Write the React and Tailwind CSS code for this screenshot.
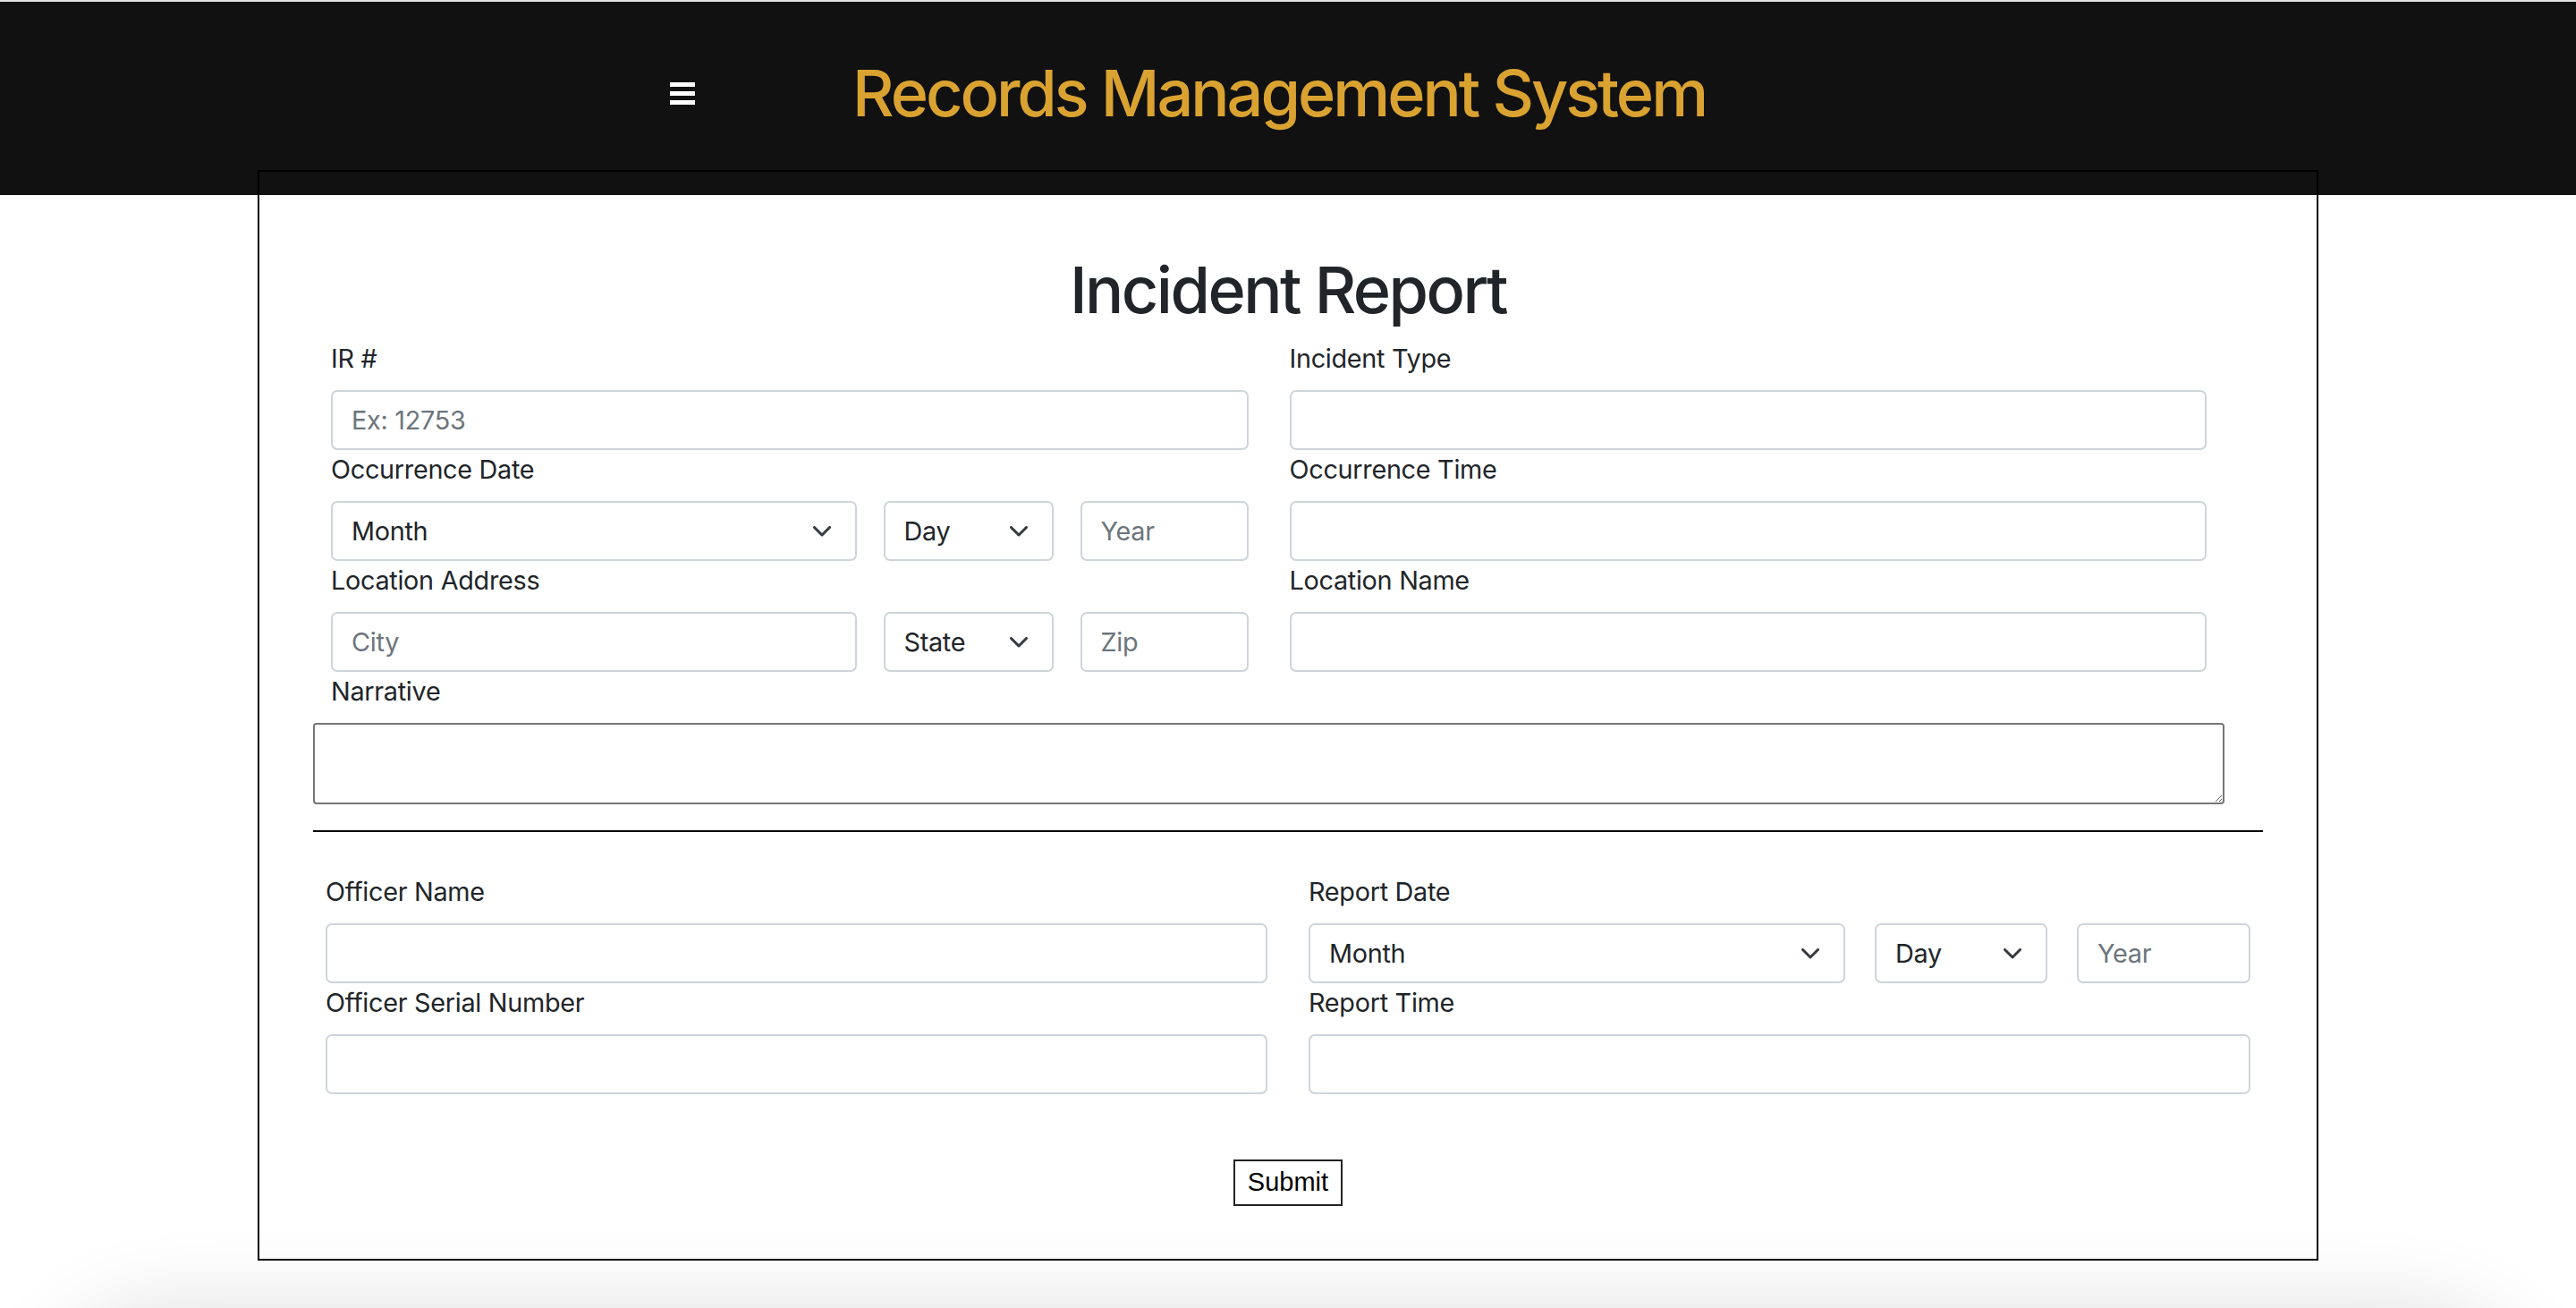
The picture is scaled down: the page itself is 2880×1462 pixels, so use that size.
import React from 'react'

function Label({ children }) {
  return (
    <label className="block text-[28.8px] leading-[43px] mb-[14px] tracking-[-0.01em] text-[#212529]">
      {children}
    </label>
  )
}

function TextInput({ placeholder, className = '' }) {
  return (
    <input
      type="text"
      placeholder={placeholder}
      className={`block min-w-0 h-[67px] rounded-[7px] border-2 border-[#ced4da] bg-white px-[21px] text-[28.8px] tracking-[-0.01em] text-[#212529] placeholder:text-[#6c757d] outline-none ${className}`}
    />
  )
}

function Chevron() {
  return (
    <svg width="20" height="12" viewBox="0 0 20 12" fill="none" className="shrink-0">
      <polyline points="1.5,1.5 10,10 18.5,1.5" stroke="#343a40" strokeWidth="3" strokeLinecap="round" strokeLinejoin="round" />
    </svg>
  )
}

function FakeSelect({ value, className = '' }) {
  return (
    <div
      className={`flex min-w-0 h-[67px] items-center justify-between rounded-[7px] border-2 border-[#ced4da] bg-white pl-[21px] pr-[27px] text-[28.8px] tracking-[-0.01em] text-[#212529] ${className}`}
    >
      <span>{value}</span>
      <Chevron />
    </div>
  )
}

function Field({ label, children }) {
  return (
    <div className="min-w-0">
      <Label>{label}</Label>
      {children}
    </div>
  )
}

export default function App() {
  return (
    <div className="relative h-[1462px] overflow-hidden bg-white font-[Inter,sans-serif]">
      {/* Top bar */}
      <header className="h-[218px] border-t-2 border-[#e3e3e3] bg-[#111111]">
        <div className="flex items-center pt-[65px] pl-[749px]">
          <div className="flex w-[28px] flex-col gap-[5px]">
            <div className="h-[5px] bg-white" />
            <div className="h-[5px] bg-white" />
            <div className="h-[5px] bg-white" />
          </div>
          <h1 className="ml-[176px] text-[72px] leading-[74px] font-medium tracking-[-0.042em] text-[#daa331]">
            Records Management System
          </h1>
        </div>
      </header>

      {/* Report card */}
      <main className="relative mx-auto -mt-[28px] w-[2304px] border-2 border-black px-[60px] pt-[89px] pb-[59px]">
        <h2 className="text-center text-[72px] leading-[86px] font-medium tracking-[-0.035em] text-[#212529]">
          Incident Report
        </h2>

        <div className="mt-[12px] w-[2137px]">
          <div className="grid grid-cols-2 gap-x-[46px] px-[20px]">
            <Field label="IR #">
              <TextInput placeholder="Ex: 12753" className="w-full" />
            </Field>
            <Field label="Incident Type">
              <TextInput className="w-full" />
            </Field>
            <Field label="Occurrence Date">
              <div className="flex gap-[30px]">
                <FakeSelect value="Month" className="flex-1" />
                <FakeSelect value="Day" className="w-[190px]" />
                <TextInput placeholder="Year" className="w-[188px]" />
              </div>
            </Field>
            <Field label="Occurrence Time">
              <TextInput className="w-full" />
            </Field>
            <Field label="Location Address">
              <div className="flex gap-[30px]">
                <TextInput placeholder="City" className="flex-1" />
                <FakeSelect value="State" className="w-[190px]" />
                <TextInput placeholder="Zip" className="w-[188px]" />
              </div>
            </Field>
            <Field label="Location Name">
              <TextInput className="w-full" />
            </Field>
          </div>
          <div className="px-[20px]">
            <Label>Narrative</Label>
          </div>
          <textarea className="block h-[91px] w-full resize-y rounded-[4px] border-2 border-[#767676] bg-white outline-none" />
        </div>

        <div className="mt-[29px] h-[2px] bg-black" />

        <div className="mt-[45px] grid grid-cols-2 gap-x-[46px] px-[14px]">
          <Field label="Officer Name">
            <TextInput className="w-full" />
          </Field>
          <Field label="Report Date">
            <div className="flex gap-[33px]">
              <FakeSelect value="Month" className="flex-1" />
              <FakeSelect value="Day" className="w-[193px]" />
              <TextInput placeholder="Year" className="w-[194px]" />
            </div>
          </Field>
          <Field label="Officer Serial Number">
            <TextInput className="w-full" />
          </Field>
          <Field label="Report Time">
            <TextInput className="w-full" />
          </Field>
        </div>

        <div className="mt-[73px] flex justify-center">
          <button className="h-[52px] w-[122px] border-2 border-[#222222] bg-white font-['Liberation_Sans',Arial,sans-serif] text-[29px] text-black">
            Submit
          </button>
        </div>
      </main>

      {/* soft shadow at the bottom edge */}
      <div className="mx-[60px] mt-[61px] h-[300px] rounded-[120px] bg-white shadow-[0_0_100px_rgba(0,0,0,0.15)]" />
    </div>
  )
}
